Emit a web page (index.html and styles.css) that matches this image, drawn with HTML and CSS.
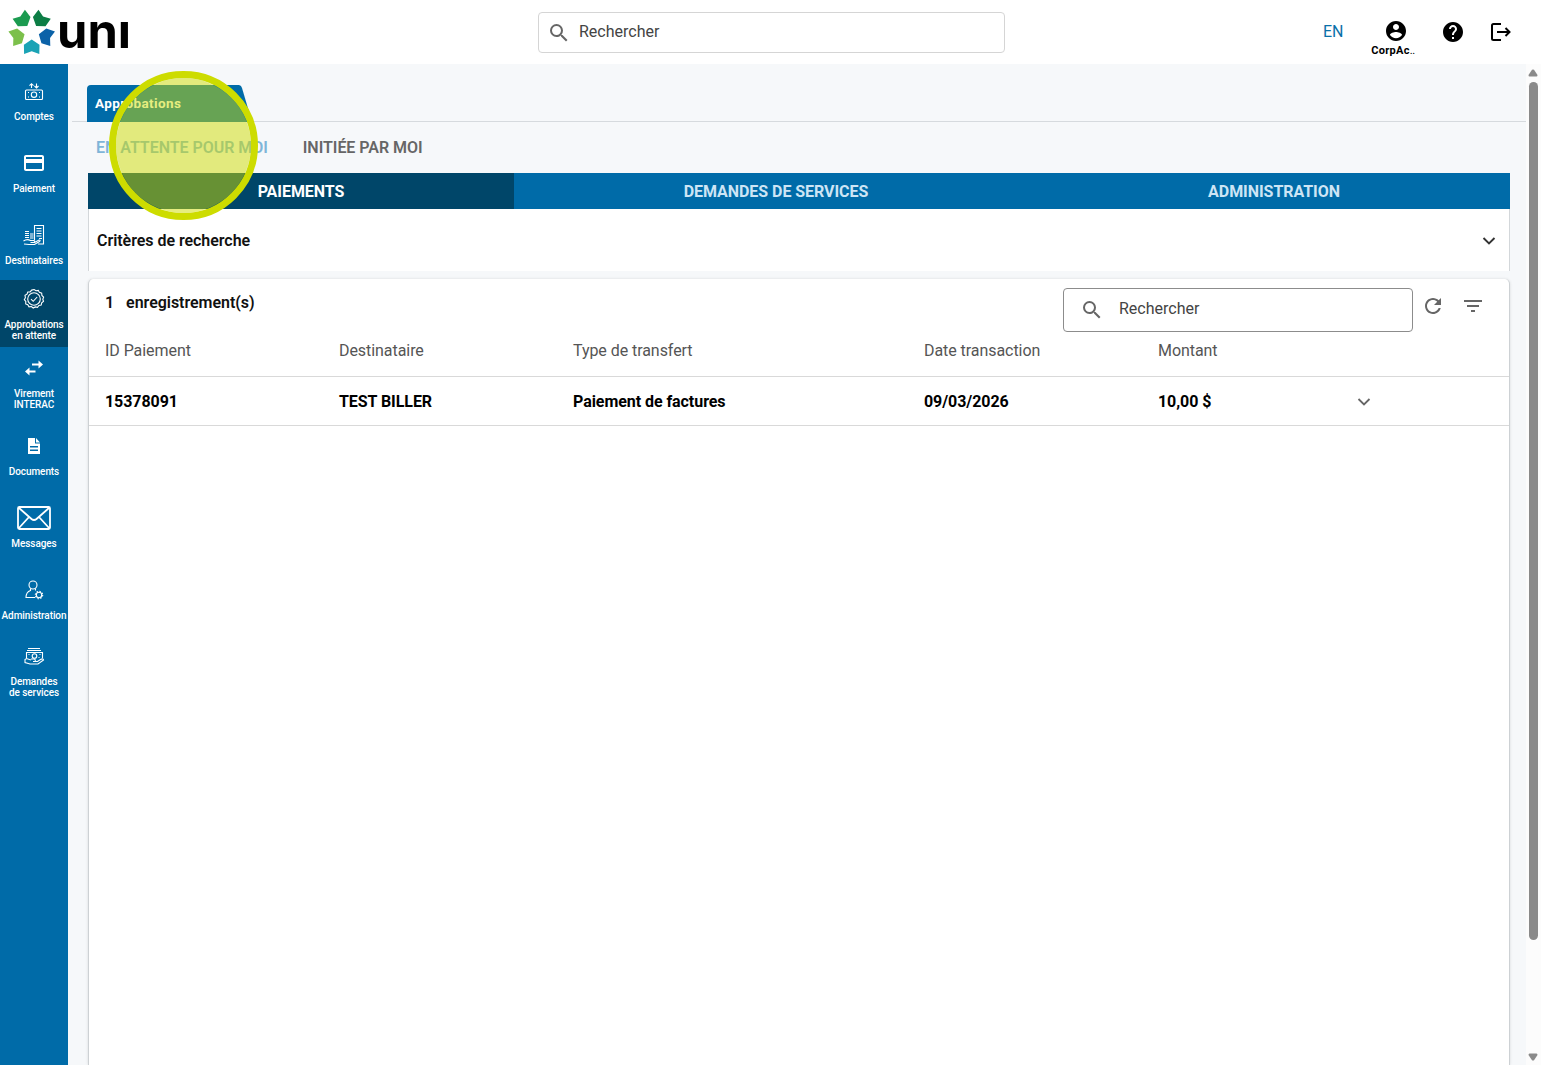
FILE: index.html
```html
<!DOCTYPE html>
<html lang="fr">
<head>
    <meta charset="UTF-8">
    <meta name="viewport" content="width=device-width, initial-scale=1.0">
    <title>UNI - Approbations</title>
    <link rel="stylesheet" href="styles.css">
</head>
<body>

    <header class="header">
        <svg class="logo" width="136" height="64" viewBox="0 0 136 64">
            <defs>
                <path id="petal" d="M0 7.500 L7.800 12.800 L7.600 22 L0 19.300 L-7.600 22 L-7.800 12.800 Z"/>
            </defs>
            <g transform="translate(31.7 32)">
                <use href="#petal" fill="#1aa3b5"/>
                <use href="#petal" fill="#7cc04b" transform="rotate(72)"/>
                <use href="#petal" fill="#1b9b50" transform="rotate(144)"/>
                <use href="#petal" fill="#0c7d45" transform="rotate(216)"/>
                <use href="#petal" fill="#0b62a8" transform="rotate(288)"/>
            </g>
            <text class="logo-text" x="57" y="47.5" textLength="74" lengthAdjust="spacingAndGlyphs">unı</text>
        </svg>
        <div class="search-main">
            <svg width="24" height="24" viewBox="0 0 24 24" fill="#666"><path d="M15.5 14h-.79l-.28-.27A6.47 6.47 0 0 0 16 9.5 6.5 6.5 0 1 0 9.5 16c1.61 0 3.09-.59 4.23-1.57l.27.28v.79l5 4.99L20.49 19l-4.99-5zm-6 0C7.01 14 5 11.99 5 9.5S7.01 5 9.5 5 14 7.01 14 9.5 11.99 14 9.5 14z"/></svg>
            <span>Rechercher</span>
        </div>
        <div class="header-actions">
            <span class="lang">EN</span>
            <div class="profile">
                <svg width="24" height="24" viewBox="0 0 24 24"><path d="M12 2C6.48 2 2 6.48 2 12s4.48 10 10 10 10-4.48 10-10S17.52 2 12 2zm0 3c1.66 0 3 1.34 3 3s-1.34 3-3 3-3-1.34-3-3 1.34-3 3-3zm0 14.2c-2.5 0-4.71-1.28-6-3.22.03-1.99 4-3.08 6-3.08 1.99 0 5.97 1.09 6 3.08-1.29 1.94-3.5 3.22-6 3.22z"/></svg>
                <span class="profile-name">CorpAc<i>..</i></span>
            </div>
            <svg class="help" width="24" height="24" viewBox="0 0 24 24"><path d="M12 2C6.48 2 2 6.48 2 12s4.48 10 10 10 10-4.48 10-10S17.52 2 12 2zm1 17h-2v-2h2v2zm2.07-7.75l-.9.92C13.45 12.9 13 13.5 13 15h-2v-.5c0-1.1.45-2.1 1.17-2.83l1.24-1.26c.37-.36.59-.86.59-1.41 0-1.1-.9-2-2-2s-2 .9-2 2H8c0-2.21 1.79-4 4-4s4 1.79 4 4c0 .88-.36 1.68-.93 2.25z"/></svg>
            <svg class="logout" width="24" height="24" viewBox="0 0 24 24" fill="none" stroke="#000" stroke-width="2"><path d="M12 4H4.500Q3 4 3 5.500V18.500Q3 20 4.500 20H12M8 12H20.500M16.500 8L20.500 12L16.500 16"/></svg>
        </div>
    </header>

    <div class="container">
        <nav class="sidebar">
            <a class="nav-item comptes">
                <svg width="20" height="20" viewBox="0 0 20 20" class="line"><rect x="1.500" y="8" width="17" height="9.500" rx="1"/><circle cx="10" cy="12.700" r="2.700"/><path d="M4 10.500h1M15 15h1M4 15h1M15 10.500h1M7.500 6V1.500M5.500 3.700L7.500 1.700L9.500 3.700M12.500 1.500V6M10.500 4L12.500 6L14.500 4"/></svg>
                <span>Comptes</span>
            </a>
            <a class="nav-item paiement">
                <svg width="24" height="24" viewBox="0 0 24 24" fill="#fff"><path d="M20 4H4c-1.110 0-1.990.89-1.990 2L2 18c0 1.110.89 2 2 2h16c1.110 0 2-.89 2-2V6c0-1.110-.89-2-2-2zm0 14H4v-6h16v6zm0-10H4V6h16v2z"/></svg>
                <span>Paiement</span>
            </a>
            <a class="nav-item destinataires">
                <svg width="24" height="24" viewBox="0 0 24 24" class="line"><path d="M12.500 17V2.500H21.500V21H16M14.500 5.500h5M14.500 8h5M14.500 10.500h5M14.500 13h5M17 15.500h3M3 8.500h4M3 10.500h4M3 12.500h4M3 14.500h4M8 11h3.500M8 13h3.500M8 15h3.500M1.500 18Q5 15.500 8.500 17.500H12Q13.500 18.500 12 19.500H8.500M12.500 19.500L17 17Q19 17 17.500 18.500L12.500 21.500H7L2 21"/></svg>
                <span>Destinataires</span>
            </a>
            <a class="nav-item active">
                <svg width="22" height="22" viewBox="0 0 22 22" class="line"><path d="M11 1.500L13 2.700L15.300 2.400L16.400 4.400L18.700 5.100L18.900 7.500L20.600 9.100L19.800 11.200L20.500 13.300L18.700 14.900L18.200 17.100L15.900 17.500L14.500 19.400L12.300 18.900L10.200 20L8.400 18.500L6 18.800L4.800 16.800L2.700 15.900L2.800 13.500L1.300 11.700L2.400 9.700L2 7.400L4 6.200L4.800 4L7.100 3.900L8.700 2.100Z"/><circle cx="11" cy="11" r="6.300"/><path d="M8 11.200L10.200 13.300L14.200 9"/></svg>
                <span>Approbations<br>en attente</span>
            </a>
            <a class="nav-item virement">
                <svg width="20" height="20" viewBox="0 0 20 20" fill="#fff"><path d="M14.500 2.500L19 6.500L14.500 10.500V7.500H8V5.500H14.500zM5.500 9.500L1 13.500L5.500 17.500V14.500H11.500V12.500H5.500z"/></svg>
                <span>Virement<br>INTERAC</span>
            </a>
            <a class="nav-item documents">
                <svg width="18" height="18" viewBox="0 0 18 18" fill="#fff"><path d="M3 1H10V6.500H15V17H3zM11 1L15 5.500H11zM5 9V10.500H13V9zM5 12.500V14H13V12.500z" fill-rule="evenodd"/></svg>
                <span>Documents</span>
            </a>
            <a class="nav-item messages">
                <svg width="36" height="26" viewBox="0 0 36 26" fill="none" stroke="#fff" stroke-width="1.800"><rect x="2" y="2" width="32" height="22" rx="1.500"/><path d="M2.500 2.500L15.500 14Q18 16 20.500 14L33.500 2.500M2.500 23.500L13 12M33.500 23.500L23 12"/></svg>
                <span>Messages</span>
            </a>
            <a class="nav-item administration">
                <svg width="22" height="22" viewBox="0 0 22 22" class="line"><circle cx="10" cy="6" r="4"/><path d="M7.500 9.500V11.500Q3 13 3 18.500H12M12.500 9.500V11.500"/><circle cx="16" cy="16" r="2.700"/><circle cx="16" cy="16" r="3.700" stroke-dasharray="1.400 1.500"/></svg>
                <span>Administration</span>
            </a>
            <a class="nav-item demandes">
                <svg width="22" height="20" viewBox="0 0 22 20" class="line"><path d="M5 2.500H17M4 4.500H18M3.500 12V6.500H19.500V12M8 14L3.500 12.500L2 13.500V16.500L7 18H15L20.500 14Q20 12 17.500 13.500L14.500 15.500H10M8 13H11Q13 13.500 12 15.500"/><circle cx="11.500" cy="10" r="2.300"/><path d="M5.500 8.500h1M16.500 8.500h1M15.500 11.500h1"/></svg>
                <span>Demandes<br>de services</span>
            </a>
        </nav>

        <main class="main-content">
            <div class="page-tabs">
                <svg class="tab-shape" width="165" height="37" viewBox="0 0 165 37"><path d="M0 37V4Q0 0 4 0H151.500Q154 0 155 3L165 37Z" fill="#006ba8"/></svg>
                <span class="tab-label">Approbations</span>
                <div class="click-marker"></div>
            </div>
            <div class="sub-tabs">
                <span class="sub-tab current">EN ATTENTE POUR MOI</span>
                <span class="sub-tab">INITIÉE PAR MOI</span>
            </div>
            <div class="panel">
                <div class="categories">
                    <div class="category selected">PAIEMENTS</div>
                    <div class="category services">DEMANDES DE SERVICES</div>
                    <div class="category admin">ADMINISTRATION</div>
                </div>
                <div class="criteria">
                    <span>Critères de recherche</span>
                    <svg width="16" height="16" viewBox="0 0 16 16" fill="none" stroke="#333" stroke-width="1.900"><path d="M2.500 6L8 11.500L13.500 6"/></svg>
                </div>
                <div class="card">
                    <div class="card-header">
                        <div class="count"><span>1</span><span>enregistrement(s)</span></div>
                        <div class="search-table">
                            <svg width="24" height="24" viewBox="0 0 24 24" fill="#666"><path d="M15.5 14h-.79l-.28-.27A6.47 6.47 0 0 0 16 9.5 6.5 6.5 0 1 0 9.5 16c1.61 0 3.09-.59 4.23-1.57l.27.28v.79l5 4.99L20.49 19l-4.99-5zm-6 0C7.01 14 5 11.99 5 9.5S7.01 5 9.5 5 14 7.01 14 9.5 11.99 14 9.5 14z"/></svg>
                            <span>Rechercher</span>
                        </div>
                        <div class="card-tools">
                            <svg width="24" height="24" viewBox="0 0 24 24" fill="#666"><path d="M17.650 6.350C16.200 4.900 14.210 4 12 4c-4.420 0-7.990 3.580-7.990 8s3.570 8 7.990 8c3.730 0 6.840-2.550 7.730-6h-2.080c-.82 2.330-3.040 4-5.650 4-3.310 0-6-2.690-6-6s2.690-6 6-6c1.660 0 3.140.69 4.220 1.780L13 11h7V4l-2.350 2.350z"/></svg>
                            <svg width="24" height="24" viewBox="0 0 24 24" fill="#666"><path d="M10 18h4v-2h-4v2zM3 6v2h18V6H3zm3 7h12v-2H6v2z"/></svg>
                        </div>
                    </div>
                    <div class="row row-head">
                        <span>ID Paiement</span>
                        <span>Destinataire</span>
                        <span>Type de transfert</span>
                        <span>Date transaction</span>
                        <span>Montant</span>
                    </div>
                    <div class="row">
                        <span>15378091</span>
                        <span>TEST BILLER</span>
                        <span>Paiement de factures</span>
                        <span>09/03/2026</span>
                        <span>10,00 $</span>
                        <svg class="expand" width="16" height="16" viewBox="0 0 16 16" fill="none" stroke="#666" stroke-width="1.800"><path d="M2.500 6L8 11.500L13.500 6"/></svg>
                    </div>
                </div>
            </div>
        </main>

        <div class="scrollbar">
            <svg width="10" height="8" viewBox="0 0 10 8" fill="#8a8a8a"><path d="M4 .8Q5 0 6 .8L9.500 6Q9.500 7.500 8.500 7.500H1.500Q.5 7.500 .5 6z"/></svg>
            <div class="thumb"></div>
            <svg class="down" width="10" height="8" viewBox="0 0 10 8" fill="#8a8a8a"><path d="M4 7.200Q5 8 6 7.200L9.500 2Q9.500 .5 8.500 .5H1.500Q.5 .5 .5 2z"/></svg>
        </div>
    </div>

</body>
</html>
```

FILE: styles.css
```css
* {
    margin: 0;
    padding: 0;
    box-sizing: border-box;
}

body {
    font-family: Roboto, "Liberation Sans", sans-serif;
    font-size: 16px;
    background-color: #f6f8fa;
    height: 100vh;
    overflow: hidden;
    display: flex;
    flex-direction: column;
}

svg {
    display: block;
    flex-shrink: 0;
}

.line {
    fill: none;
    stroke: #fff;
    stroke-width: 1.1;
}

.header {
    height: 64px;
    flex-shrink: 0;
    background-color: #fff;
    display: flex;
    align-items: flex-start;
}

.logo-text {
    font-family: Inter, sans-serif;
    font-size: 48px;
    font-weight: 700;
}

.search-main {
    width: 467px;
    height: 41px;
    margin: 12px 0 0 402px;
    padding: 0 0 2px 8px;
    border: 1px solid #d5d5d5;
    border-radius: 4px;
    display: flex;
    align-items: center;
    gap: 8px;
    color: #444;
}

.search-main svg {
    position: relative;
    top: 1px;
}

.header-actions {
    display: flex;
    margin-left: 318px;
}

.lang {
    margin-top: 23px;
    width: 20px;
    color: #0a70a8;
    line-height: 18px;
}

.profile {
    width: 50px;
    margin: 19px 0 0 28px;
    display: flex;
    flex-direction: column;
    align-items: center;
}

.profile-name {
    margin: 1px 6px 0 0;
    font-size: 11px;
    font-weight: 700;
    line-height: 13px;
    letter-spacing: 0.3px;
}

.profile i {
    font-style: normal;
    font-weight: 400;
    letter-spacing: -0.4px;
}

.help {
    margin: 20px 0 0 20px;
}

.logout {
    margin: 20px 0 0 24px;
}

.container {
    display: flex;
    flex: 1;
    min-height: 0;
}

.sidebar {
    width: 68px;
    flex-shrink: 0;
    background-color: #006ba8;
    display: flex;
    flex-direction: column;
}

.nav-item {
    height: 72px;
    display: flex;
    flex-direction: column;
    align-items: center;
    justify-content: flex-end;
    padding-bottom: 14px;
    color: #fff;
    font-size: 10px;
    font-weight: 500;
    line-height: 11px;
    letter-spacing: -0.08px;
    text-align: center;
    white-space: nowrap;
}

.comptes svg {
    margin-bottom: 9px;
}

.paiement svg {
    margin-bottom: 8px;
}

.destinataires svg {
    margin-bottom: 8px;
}

.nav-item.active {
    height: 67px;
    padding-bottom: 6px;
    background-color: #004669;
}

.nav-item.active svg {
    margin-bottom: 9px;
}

.virement {
    height: 73px;
    padding-bottom: 10px;
}

.virement svg {
    margin-bottom: 10px;
}

.documents {
    height: 71px;
}

.documents svg {
    margin-bottom: 11px;
}

.messages svg {
    margin-bottom: 7px;
}

.administration svg {
    margin-bottom: 9px;
}

.demandes {
    height: 72px;
    padding-bottom: 9px;
}

.demandes svg {
    margin-bottom: 10px;
}

.main-content {
    width: 1458px;
    flex-shrink: 0;
    display: flex;
    flex-direction: column;
}

.page-tabs {
    height: 58px;
    margin-left: 4px;
    padding: 21px 0 0 15px;
    border-bottom: 1px solid #d6dade;
    position: relative;
}

.tab-label {
    position: absolute;
    left: 23px;
    top: 31px;
    color: #fff;
    font-size: 13.5px;
    font-weight: 700;
    line-height: 16px;
    letter-spacing: 0.4px;
}

/* yellow ring over the clicked tab */
.click-marker {
    position: absolute;
    left: 37px;
    top: 7px;
    width: 149px;
    height: 149px;
    border: 7px solid #cddc00;
    border-radius: 50%;
    background-color: rgba(205, 220, 0, 0.5);
    background-clip: padding-box;
    z-index: 2;
}

.sub-tabs {
    height: 51px;
    padding-left: 28px;
    display: flex;
    align-items: center;
    gap: 35px;
    font-weight: 600;
    letter-spacing: -0.03px;
    color: #666;
}

.sub-tab.current {
    color: #7fb5d8;
}

.panel {
    width: 1422px;
    margin-left: 20px;
    flex: 1;
    display: flex;
    flex-direction: column;
}

.categories {
    height: 36px;
    display: flex;
    background-color: #006ba8;
    color: #cde5f5;
    font-weight: 700;
    letter-spacing: -0.05px;
}

.category {
    width: 426px;
    display: flex;
    align-items: center;
    justify-content: center;
}

.category.selected {
    background-color: #004669;
    color: #fff;
}

.category.services {
    width: 524px;
}

.category.admin {
    width: 472px;
}

.criteria {
    height: 62px;
    padding: 0 12px 0 8px;
    background-color: #fff;
    border: solid #d3d7da;
    border-width: 0 1px;
    display: flex;
    align-items: center;
    justify-content: space-between;
    font-weight: 600;
    letter-spacing: -0.04px;
    color: #111;
}

.card {
    flex: 1;
    margin-top: 8px;
    background-color: #fff;
    border: solid #cdd1d4;
    border-width: 0 1px;
    border-radius: 5px 5px 0 0;
    box-shadow: 0 0 3px rgba(0, 0, 0, 0.12);
}

.card-header {
    height: 53px;
    padding: 9px 0 0 16px;
    display: flex;
}

.count {
    width: 958px;
    display: flex;
    gap: 12px;
    padding-top: 5px;
    font-weight: 600;
    letter-spacing: -0.04px;
    color: #111;
    line-height: 20px;
}

.search-table {
    width: 350px;
    height: 44px;
    padding: 0 0 3px 16px;
    border: 1px solid #8c8c8c;
    border-radius: 4px;
    display: flex;
    align-items: center;
    gap: 15px;
    color: #444;
}

.search-table svg {
    position: relative;
    top: 1px;
}

.card-tools {
    display: flex;
    gap: 16px;
    margin-left: 8px;
    padding-top: 6px;
}

.row {
    height: 49px;
    padding-left: 16px;
    display: grid;
    grid-template-columns: 234px 234px 351px 234px 198px 1fr;
    align-items: center;
    border-bottom: 1px solid #d9d9d9;
    font-weight: 700;
    letter-spacing: -0.06px;
    color: #000;
}

.row-head {
    height: 45px;
    padding-bottom: 7px;
    font-weight: 400;
    color: #555;
}

.scrollbar {
    flex: 1;
    background-color: #fcfcfc;
    display: flex;
    flex-direction: column;
    align-items: center;
    padding: 5px 1px 4px 0;
}

.thumb {
    width: 9px;
    height: 858px;
    margin-top: 5px;
    border-radius: 5px;
    background-color: #8a8a8a;
}

.down {
    margin-top: auto;
}
```
